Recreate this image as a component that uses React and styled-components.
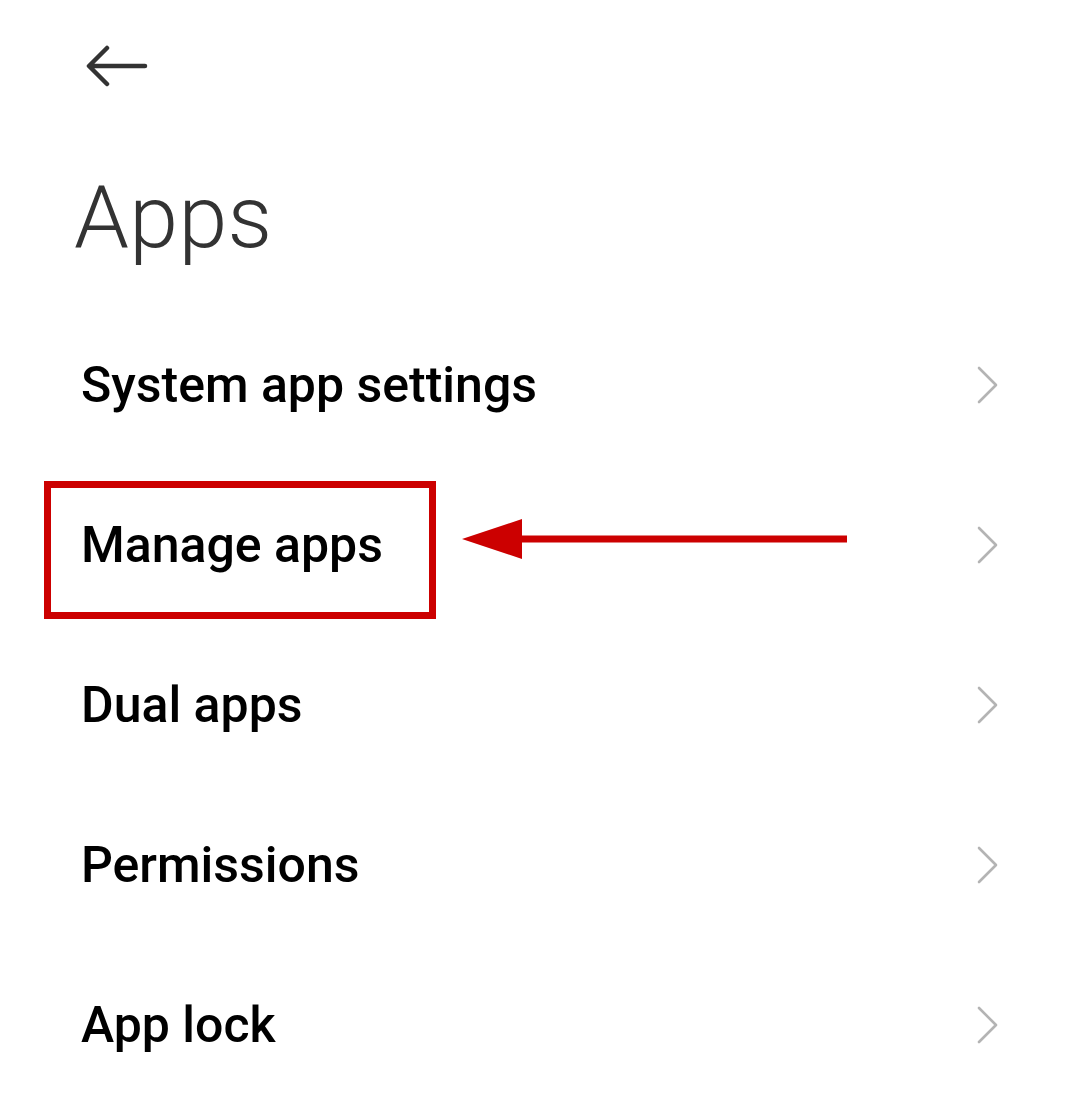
import styled, { createGlobalStyle } from "styled-components";

const GlobalStyle = createGlobalStyle`
  body {
    margin: 0;
    background: #ffffff;
    font-family: Roboto, "Noto Sans", sans-serif;
  }
`;

const Page = styled.div`
  width: 1080px;
  min-height: 1108px;
  background: #ffffff;
`;

const Header = styled.div`
  height: 132px;
  padding: 44px 0 0 86px;
  box-sizing: border-box;
`;

const BackButton = styled.button`
  display: block;
  padding: 0;
  border: none;
  background: none;
  width: 62px;
  height: 44px;
  cursor: pointer;
`;

const Title = styled.h1`
  margin: 41px 0 44px 74px;
  font-size: 88px;
  line-height: 1;
  font-weight: 300;
  color: #333333;
  letter-spacing: 0.3px;
`;

const List = styled.div`
  display: flex;
  flex-direction: column;
`;

const Row = styled.div`
  position: relative;
  height: 160px;
  display: flex;
  align-items: center;
  justify-content: space-between;
  padding: 0 80px 0 81px;
`;

const Label = styled.span`
  font-size: 50px;
  line-height: 1;
  font-weight: 500;
  color: #000000;
`;

const Chevron = styled.svg`
  width: 24px;
  height: 40px;
  flex-shrink: 0;
`;

const Highlight = styled.div`
  position: absolute;
  left: 44px;
  top: 16px;
  width: 392px;
  height: 138px;
  box-sizing: border-box;
  border: 7px solid #cc0000;
  pointer-events: none;
`;

const Pointer = styled.svg`
  position: absolute;
  left: 460px;
  top: 52px;
  width: 390px;
  height: 44px;
  pointer-events: none;
`;

const items = [
  "System app settings",
  "Manage apps",
  "Dual apps",
  "Permissions",
  "App lock",
];

const ChevronIcon = () => (
  <Chevron viewBox="0 0 24 40">
    <polyline
      points="3,3 20,20 3,37"
      fill="none"
      stroke="#b4b4b4"
      strokeWidth="2.6"
      strokeLinecap="round"
      strokeLinejoin="round"
    />
  </Chevron>
);

export default function App() {
  return (
    <Page>
      <GlobalStyle />
      <Header>
        <BackButton aria-label="Back">
          <svg width="62" height="44" viewBox="0 0 62 44">
            <path
              d="M59 22 H4 M21 4 L3 22 L21 40"
              fill="none"
              stroke="#333333"
              strokeWidth="4.5"
              strokeLinecap="round"
              strokeLinejoin="round"
            />
          </svg>
        </BackButton>
      </Header>
      <Title>Apps</Title>
      <List>
        {items.map((item) => (
          <Row key={item}>
            <Label>{item}</Label>
            <ChevronIcon />
            {item === "Manage apps" && (
              <>
                <Highlight />
                <Pointer viewBox="0 0 390 44">
                  <polygon points="2,22 62,2 62,42" fill="#cc0000" />
                  <line x1="60" y1="22" x2="387" y2="22" stroke="#cc0000" strokeWidth="7" />
                </Pointer>
              </>
            )}
          </Row>
        ))}
      </List>
    </Page>
  );
}
